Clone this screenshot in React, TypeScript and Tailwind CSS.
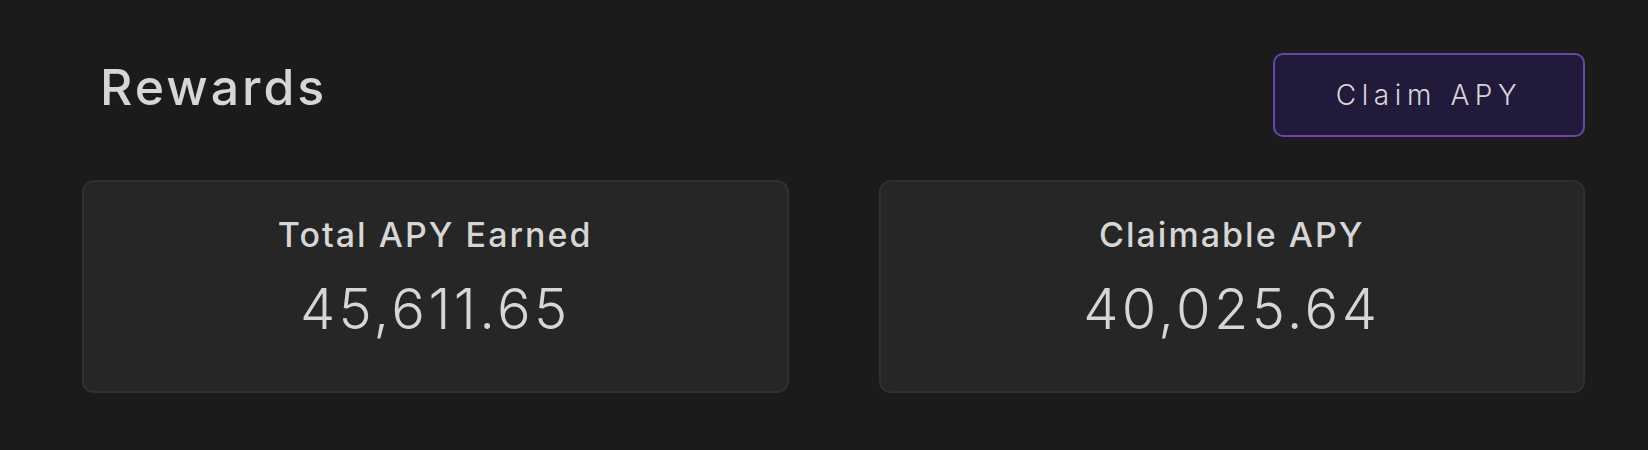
export default function App() {
  const stats = [
    { label: "Total APY Earned", value: "45,611.65" },
    { label: "Claimable APY", value: "40,025.64" },
  ];

  return (
    <div className="min-h-[450px] w-full bg-[#1b1b1b] pl-[82px] pr-[63px] pt-[53px] font-['Inter',sans-serif] text-[#d6d6d6]">
      <div className="flex items-start justify-between">
        <h1 className="ml-[18px] mt-[4px] text-[50px] font-medium leading-[60px] tracking-[0.06em]">
          Rewards
        </h1>
        <button className="flex h-[84px] w-[312px] items-center justify-center rounded-[10px] border-2 border-[#6a46a8] bg-[#221a3b] text-[28px] font-light tracking-[0.2em] text-[#d6d6d6]">
          Claim APY
        </button>
      </div>

      <div className="mt-[43px] grid grid-cols-2 gap-[90px]">
        {stats.map((s) => (
          <div
            key={s.label}
            className="flex h-[213px] flex-col items-center rounded-[12px] border-2 border-[#303033] bg-[#262626] pt-[33px]"
          >
            <div className="text-[34px] font-medium leading-[40px] tracking-[0.06em]">
              {s.label}
            </div>
            <div className="mt-[22px] text-[56px] font-light leading-[64px] tracking-[0.06em]">
              {s.value}
            </div>
          </div>
        ))}
      </div>
    </div>
  );
}
